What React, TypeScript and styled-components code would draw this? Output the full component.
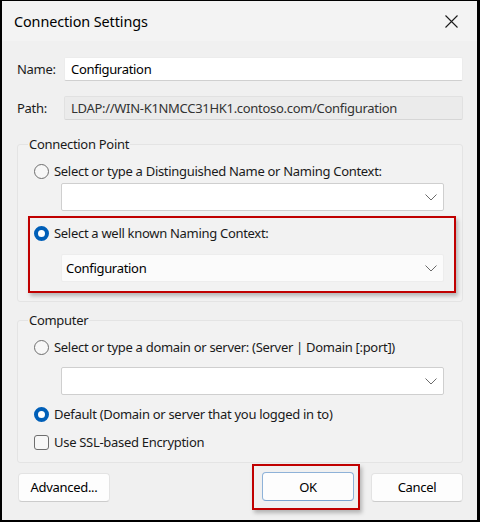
import styled, { createGlobalStyle } from 'styled-components';

const GlobalStyle = createGlobalStyle`
	html, body {
		margin: 0;
		padding: 0;
		background: #ffffff;
	}
	* {
		box-sizing: border-box;
	}
`;

const Window = styled.div`
	width: 480px;
	height: 522px;
	display: flex;
	flex-direction: column;
	border: 2px solid #000000;
	border-top-width: 1px;
	border-right-width: 3px;
	background: #f0f0f0;
	font-family: 'Noto Sans', 'Open Sans', sans-serif;
	font-size: 13px;
	letter-spacing: -0.3px;
	color: #1a1a1a;
`;

const TitleBar = styled.div`
	height: 40px;
	display: flex;
	align-items: center;
	justify-content: space-between;
	padding: 0 14px 0 12px;
	background: #f3f3f3;
`;

const Title = styled.span`
	font-size: 14.4px;
	letter-spacing: -0.1px;
	color: #000000;
`;

const CloseButton = styled.button`
	width: 24px;
	height: 24px;
	display: flex;
	align-items: center;
	justify-content: center;
	padding: 0;
	border: none;
	background: none;
`;

const Body = styled.div`
	flex: 1;
	display: flex;
	flex-direction: column;
	padding: 16px 14px 0 15px;
`;

const FieldRow = styled.div<{ $top?: number }>`
	display: flex;
	align-items: center;
	margin-top: ${(p) => p.$top ?? 0}px;
`;

const FieldLabel = styled.label`
	width: 47px;
	flex-shrink: 0;
`;

const TextBox = styled.div<{ $readOnly?: boolean }>`
	flex: 1;
	height: 24px;
	display: flex;
	align-items: center;
	padding: 0 6px;
	background: ${(p) => (p.$readOnly ? '#ebebeb' : '#ffffff')};
	border: 1px solid ${(p) => (p.$readOnly ? '#e1e1e1' : '#ececec')};
	border-bottom-color: ${(p) => (p.$readOnly ? '#d6d6d6' : '#d0d0d0')};
	color: ${(p) => (p.$readOnly ? '#333333' : '#000000')};
	border-radius: 2px;
`;

const Group = styled.fieldset<{ $top: number; $bottom: number }>`
	margin: ${(p) => p.$top}px 0 0 0;
	padding: 2px 6px ${(p) => p.$bottom}px 10px;
	border: 1px solid #e4e4e4;
	border-radius: 3px;
	background: #f2f2f2;
	min-width: 0;
`;

const Legend = styled.legend`
	padding: 0 1px;
	margin-left: 0;
	line-height: 18px;
`;

const Choice = styled.div<{ $highlight?: boolean; $pt?: number; $pb?: number }>`
	display: flex;
	flex-direction: column;
	padding: ${(p) => p.$pt ?? 4}px 10px ${(p) => p.$pb ?? 3}px 4px;
	border: 2px solid ${(p) => (p.$highlight ? '#c00000' : 'transparent')};
	box-shadow: ${(p) => (p.$highlight ? '2px 3px 4px rgba(0, 0, 0, 0.25)' : 'none')};
`;

const OptionRow = styled.label<{ $top?: number }>`
	height: 20px;
	display: flex;
	align-items: center;
	gap: 5px;
	margin-top: ${(p) => p.$top ?? 0}px;
	white-space: nowrap;
`;

const RadioMark = styled.span<{ $checked?: boolean }>`
	width: 15px;
	height: 15px;
	flex-shrink: 0;
	border-radius: 50%;
	border: ${(p) => (p.$checked ? '4px solid #005fb8' : '1px solid #6e6e6e')};
	background: ${(p) => (p.$checked ? '#ffffff' : '#f7f7f7')};
`;

const CheckMark = styled.span`
	width: 15px;
	height: 15px;
	flex-shrink: 0;
	border-radius: 3px;
	border: 1px solid #6e6e6e;
	background: #f7f7f7;
`;

const Combo = styled.div<{ $top: number; $soft?: boolean }>`
	height: 28px;
	margin: ${(p) => p.$top}px 0 0 27px;
	display: flex;
	align-items: center;
	justify-content: space-between;
	padding: 0 6px 0 4px;
	background: ${(p) => (p.$soft ? '#fbfbfb' : '#ffffff')};
	border: 1px solid ${(p) => (p.$soft ? '#ededed' : '#cfcfcf')};
	border-radius: 2px;
	color: #000000;
`;

const ButtonRow = styled.div`
	height: 46px;
	margin-top: 1px;
	display: flex;
	align-items: center;
	gap: 11px;
	padding-left: 1px;
`;

const Button = styled.button<{ $default?: boolean }>`
	width: 92px;
	height: 29px;
	padding: 0;
	font: inherit;
	letter-spacing: inherit;
	color: #000000;
	background: #fdfdfd;
	border: 1px solid ${(p) => (p.$default ? '#8eb2d8' : '#e3e3e3')};
	border-bottom-color: ${(p) => (p.$default ? '#7aa3cf' : '#cccccc')};
	border-radius: 4px;
`;

const Spacer = styled.div`
	flex: 1;
`;

const Callout = styled.div`
	padding: 6px 4px 7px 8px;
	border: 2px solid #c00000;
	box-shadow: 2px 3px 4px rgba(0, 0, 0, 0.25);
`;

const Chevron = () => (
	<svg width='12' height='7' viewBox='0 0 12 7'>
		<polyline points='0.5,0.5 6,6 11.5,0.5' fill='none' stroke='#6a6a6a' strokeWidth='1' />
	</svg>
);

const CloseIcon = () => (
	<svg width='13' height='13' viewBox='0 0 13 13'>
		<path d='M0.5 0.5 L12.5 12.5 M12.5 0.5 L0.5 12.5' stroke='#1a1a1a' strokeWidth='1.1' />
	</svg>
);

const App = () => (
	<>
		<GlobalStyle />
		<Window>
			<TitleBar>
				<Title>Connection Settings</Title>
				<CloseButton aria-label='Close'>
					<CloseIcon />
				</CloseButton>
			</TitleBar>
			<Body>
				<FieldRow>
					<FieldLabel>Name:</FieldLabel>
					<TextBox>Configuration</TextBox>
				</FieldRow>
				<FieldRow $top={15}>
					<FieldLabel>Path:</FieldLabel>
					<TextBox $readOnly>LDAP://WIN-K1NMCC31HK1.contoso.com/Configuration</TextBox>
				</FieldRow>

				<Group $top={15} $bottom={8}>
					<Legend>Connection Point</Legend>
					<Choice $pt={4} $pb={3}>
						<OptionRow>
							<RadioMark />
							Select or type a Distinguished Name or Naming Context:
						</OptionRow>
						<Combo $top={2}>
							<span />
							<Chevron />
						</Combo>
					</Choice>
					<Choice $highlight $pt={5} $pb={9}>
						<OptionRow>
							<RadioMark $checked />
							Select a well known Naming Context:
						</OptionRow>
						<Combo $top={11} $soft>
							<span>Configuration</span>
							<Chevron />
						</Combo>
					</Choice>
				</Group>

				<Group $top={9} $bottom={8}>
					<Legend>Computer</Legend>
					<Choice $pt={4} $pb={0}>
						<OptionRow>
							<RadioMark />
							Select or type a domain or server: (Server | Domain [:port])
						</OptionRow>
						<Combo $top={10}>
							<span />
							<Chevron />
						</Combo>
						<OptionRow $top={9}>
							<RadioMark $checked />
							Default (Domain or server that you logged in to)
						</OptionRow>
						<OptionRow $top={8}>
							<CheckMark />
							Use SSL-based Encryption
						</OptionRow>
					</Choice>
				</Group>

				<ButtonRow>
					<Button>Advanced...</Button>
					<Spacer />
					<Callout>
						<Button $default>OK</Button>
					</Callout>
					<Button>Cancel</Button>
				</ButtonRow>
			</Body>
		</Window>
	</>
);

export default App;
